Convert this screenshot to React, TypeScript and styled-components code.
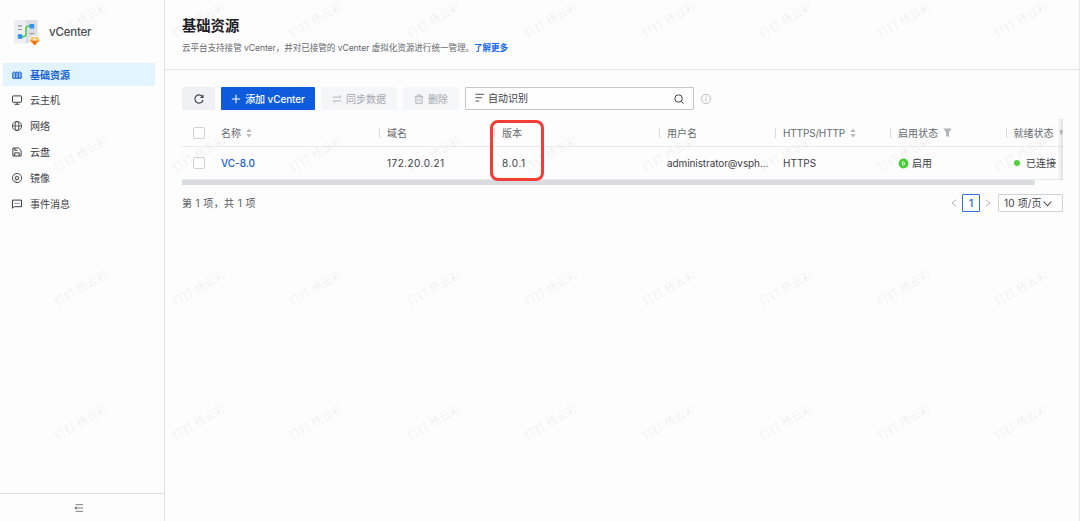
import React from 'react';
import styled, { createGlobalStyle } from 'styled-components';

const Global = createGlobalStyle`
  * { box-sizing: border-box; }
  body {
    margin: 0;
    background: #fdfdfd;
    color: #3d4045;
    font-family: Inter, "Noto Sans CJK SC", sans-serif;
    font-size: 10px;
    line-height: 14px;
    overflow: hidden;
  }
`;

const Shell = styled.div`
  position: relative;
  display: flex;
  width: 1080px;
  height: 521px;
  overflow: hidden;
  border-right: 1px solid #e6e7e8;
`;

const Sidebar = styled.aside`
  display: flex;
  flex-direction: column;
  flex: none;
  width: 165px;
  border-right: 1px solid #dfe0e2;
`;

const Brand = styled.div`
  display: flex;
  align-items: center;
  height: 63px;
  padding: 3px 0 0 12px;
  gap: 7px;
`;

const BrandName = styled.span`
  font-size: 11.5px;
  font-weight: 500;
  letter-spacing: -0.2px;
  color: #4a4d52;
  padding-bottom: 2px;
`;

const Nav = styled.nav`
  display: flex;
  flex-direction: column;
  gap: 2.9px;
  padding: 0 9px 0 3px;
  flex: 1;
`;

const NavItem = styled.a<{ $active?: boolean }>`
  display: flex;
  align-items: center;
  gap: 7px;
  height: 23px;
  padding-left: 8px;
  border-radius: 1px;
  background: ${p => (p.$active ? '#e2f4fe' : 'transparent')};
  color: ${p => (p.$active ? '#1660d6' : '#3d4045')};
  font-weight: ${p => (p.$active ? 700 : 400)};
`;

const Collapse = styled.div`
  display: flex;
  align-items: center;
  justify-content: center;
  height: 28px;
  padding-right: 6px;
  border-top: 1px solid #dfe0e2;
  color: #606368;
`;

const Main = styled.main`
  flex: 1;
  min-width: 0;
`;

const Header = styled.header`
  height: 70px;
  padding: 15px 17px 0;
  border-bottom: 1px solid #e4e5e7;
`;

const Title = styled.h1`
  margin: 0;
  font-size: 14.3px;
  line-height: 21px;
  font-weight: 600;
  color: #1d2025;
`;

const Description = styled.p`
  margin: 5px 0 0;
  font-size: 8.6px;
  line-height: 14px;
  letter-spacing: -0.07px;
  white-space: nowrap;
  color: #66696e;
`;

const MoreLink = styled.a`
  color: #1668f0;
  font-weight: 600;
`;

const Content = styled.section`
  padding: 17px 16px 0 17px;
`;

const Toolbar = styled.div`
  display: flex;
  align-items: center;
  gap: 6px;
  height: 23px;
`;

const Button = styled.button<{ $kind: 'plain' | 'primary' | 'disabled'; $width: number }>`
  display: flex;
  align-items: center;
  justify-content: center;
  gap: 4px;
  flex: none;
  width: ${p => p.$width}px;
  height: 23px;
  padding: 0;
  border: 0;
  border-radius: 1px;
  font: inherit;
  white-space: nowrap;
  font-weight: ${p => (p.$kind === 'primary' ? 500 : 400)};
  letter-spacing: ${p => (p.$kind === 'primary' ? -0.1 : 0)}px;
  background: ${p => ({ plain: '#eff1f5', primary: '#0e5cdd', disabled: '#f5f6f8' })[p.$kind]};
  color: ${p => ({ plain: '#3d4045', primary: '#ffffff', disabled: '#a5a8ad' })[p.$kind]};
`;

const Search = styled.div`
  display: flex;
  align-items: center;
  width: 229px;
  height: 23px;
  padding: 0 8px;
  gap: 2px;
  border: 1px solid #c5c7ca;
  border-radius: 1px;
  background: #fefefe;
`;

const SearchText = styled.span`
  flex: 1;
  padding-bottom: 1px;
`;

const InfoSlot = styled.span`
  display: flex;
  color: #b8babd;
`;

const columns = '39px 166px 115px 165px 116px 115px 116px 49px';

const Table = styled.div`
  position: relative;
  margin-top: 9px;
  width: 881px;
  overflow: hidden;
`;

const TableRow = styled.div<{ $head?: boolean }>`
  display: grid;
  grid-template-columns: ${columns};
  align-items: center;
  height: ${p => (p.$head ? 28 : 33)}px;
  border-bottom: 1px solid #e9eaec;
  color: ${p => (p.$head ? '#66696e' : '#3d4045')};
`;

const Cell = styled.div<{ $gap?: number; $spacing?: number }>`
  display: flex;
  align-items: center;
  gap: ${p => p.$gap ?? 5}px;
  height: 14px;
  white-space: nowrap;
  letter-spacing: ${p => p.$spacing ?? 0}px;
`;

const DividedCell = styled(Cell)`
  margin-left: -8px;
  &::before {
    content: '';
    width: 1px;
    height: 10px;
    margin-right: ${p => 7 - (p.$gap ?? 5)}px;
    background: #d9dadd;
  }
`;

const Checkbox = styled.span`
  width: 12px;
  height: 12px;
  margin-left: 11px;
  border: 1px solid #d0d2d5;
  border-radius: 2px;
  background: #fff;
`;

const NameLink = styled.a`
  color: #1660d6;
  font-weight: 500;
`;

const Dot = styled.span`
  width: 6px;
  height: 6px;
  border-radius: 50%;
  background: #52d13e;
`;

const EdgeShadow = styled.div`
  position: absolute;
  top: 0;
  right: 0;
  width: 6px;
  height: 100%;
  background: linear-gradient(to right, rgba(0, 0, 0, 0), rgba(0, 0, 0, 0.11));
`;

const ScrollTrack = styled.div`
  height: 5px;
`;

const ScrollThumb = styled.div`
  width: 853px;
  height: 5px;
  border-radius: 0 3px 3px 0;
  background: #dadbde;
`;

const Footer = styled.div`
  display: flex;
  align-items: center;
  margin-top: 9px;
  height: 18px;
  color: #55585d;
`;

const Total = styled.span`
  flex: 1;
  letter-spacing: 0.4px;
`;

const Pager = styled.div`
  display: flex;
  align-items: center;
  color: #a9acb0;
`;

const PageNumber = styled.span`
  display: flex;
  align-items: center;
  justify-content: center;
  width: 18px;
  height: 18px;
  margin: 0 4px;
  border: 1px solid #2f6fe0;
  border-radius: 1px;
  color: #1660d6;
  font-weight: 500;
`;

const PageSize = styled.span`
  display: flex;
  align-items: center;
  gap: 1px;
  width: 65px;
  height: 18px;
  margin-left: 6px;
  padding-left: 5px;
  border: 1px solid #d0d2d5;
  border-radius: 1px;
  color: #3d4045;
  white-space: nowrap;
  letter-spacing: 0.15px;
`;

const Highlight = styled.div`
  position: absolute;
  left: 489.5px;
  top: 120px;
  width: 54.5px;
  height: 61px;
  border: 3px solid #f23d33;
  border-radius: 8px;
`;

const WatermarkLayer = styled.div`
  position: absolute;
  left: 22px;
  top: -47px;
  display: grid;
  grid-template-columns: repeat(9, 117.5px);
  grid-auto-rows: 134px;
  pointer-events: none;
`;

const Mark = styled.span`
  display: flex;
  align-items: center;
  justify-content: center;
  font-size: 11.3px;
  font-weight: 500;
  color: rgba(0, 0, 0, 0.06);
  transform: rotate(-30deg);
`;

const Icon = ({ size = 12, width = 1, children }: { size?: number; width?: number; children: React.ReactNode }) => (
  <svg width={size} height={size} viewBox="0 0 12 12" fill="none" stroke="currentColor" strokeWidth={width}>
    {children}
  </svg>
);

const Logo = () => (
  <svg width="30" height="30" viewBox="0 0 30 30">
    <rect x="2" y="2" width="11.5" height="23.5" rx="1" fill="#eceef1" />
    <rect x="13.5" y="2" width="12" height="23.5" rx="1" fill="#dcdee4" />
    <path d="M6 7.8h4M6 11.5h4M17.5 15.5h4.5" stroke="#8b909b" strokeWidth="1.2" />
    <path d="M8 18.6h3.5q2.5 0 2.5-2.5v-6q0-1.8 2-1.8h3" fill="none" stroke="#50cc50" strokeWidth="1.6" />
    <rect x="5.8" y="16.2" width="4.5" height="4.6" rx=".5" fill="#3293ef" />
    <rect x="17.5" y="6" width="4.7" height="4.6" rx=".5" fill="#3293ef" />
    <circle cx="22.6" cy="23" r="5.8" fill="#fdfdfd" />
    <path d="M19.6 19.2h6l2.1 3.4-5.1 5-5.1-5z" fill="#f58a1b" />
    <path d="M19.6 19.2h6l2.1 3.4h-10.2z" fill="#ffc46a" />
    <path d="M20.5 22.6h4.2l-2.1 5z" fill="#e96c0c" />
    <path d="M22.6 19.2l2.1 3.4h-4.2z" fill="#fff0d0" />
  </svg>
);

const icons = {
  resource: (
    <Icon>
      <path d="M1.8 9.3V3.8L3.3 2.8 4.7 3.8V9.3zM4.7 3.8 6 2.8 7.3 3.8V9.3H4.7M7.3 3.8 8.7 2.8l1.5 1v5.5H7.3" fill="#8fbcf5" />
    </Icon>
  ),
  host: (
    <Icon>
      <rect x="1.5" y="1.9" width="9" height="6.4" rx=".6" />
      <path d="M6 8.3v1.8M3.6 10.3h4.8" />
    </Icon>
  ),
  network: (
    <Icon width={0.9}>
      <circle cx="6" cy="6" r="4.6" />
      <ellipse cx="6" cy="6" rx="2" ry="4.6" />
      <path d="M1.4 6h9.2" strokeWidth=".8" />
    </Icon>
  ),
  disk: (
    <Icon>
      <path d="M1.9 2h5.6l2.6 2.5V10H1.9zM3.7 10V6.9h4.5V10M3.8 2v2.4h2.5" />
    </Icon>
  ),
  image: (
    <Icon width={0.9}>
      <circle cx="6" cy="6" r="4.6" />
      <circle cx="6" cy="6" r="1.8" />
      <circle cx="6" cy="6" r=".5" fill="currentColor" stroke="none" />
      <path d="M3.3 7.8q1 1.4 2.7 1.4" strokeWidth=".5" />
    </Icon>
  ),
  event: (
    <Icon>
      <path d="M1.5 10.3V2.1h9v6.6H3.2z" />
      <path d="M3.6 5.4h1M5.5 5.4h1M7.4 5.4h1" />
    </Icon>
  ),
};

const navItems: { icon: keyof typeof icons; label: string }[] = [
  { icon: 'resource', label: '基础资源' },
  { icon: 'host', label: '云主机' },
  { icon: 'network', label: '网络' },
  { icon: 'disk', label: '云盘' },
  { icon: 'image', label: '镜像' },
  { icon: 'event', label: '事件消息' },
];

const Sorter = () => (
  <svg width="6" height="10" viewBox="0 0 6 10" fill="#b7babe">
    <path d="M3 .6 5.7 4H.3zM3 9.4 5.7 6H.3z" />
  </svg>
);

const Filter = () => (
  <svg width="9" height="9" viewBox="0 0 9 9" fill="#b0b3b7">
    <path d="M.5.5h8L5.9 4.5v4H3.1v-4z" />
  </svg>
);

const Chevron = ({ d, size = 8 }: { d: string; size?: number }) => (
  <svg width={size} height={size} viewBox="0 0 8 8" fill="none" stroke="currentColor" strokeWidth="0.9">
    <path d={d} />
  </svg>
);

export default function App() {
  return (
    <>
      <Global />
      <Shell>
        <Sidebar>
          <Brand>
            <Logo />
            <BrandName>vCenter</BrandName>
          </Brand>
          <Nav>
            {navItems.map((item, i) => (
              <NavItem key={item.icon} $active={i === 0}>
                {icons[item.icon]}
                {item.label}
              </NavItem>
            ))}
          </Nav>
          <Collapse>
            <Icon size={10}>
              <path d="M2 2h9M2 6h9M2 10h9" />
              <path d="M3 3.8.6 6 3 8.2z" fill="currentColor" stroke="none" />
            </Icon>
          </Collapse>
        </Sidebar>
        <Main>
          <Header>
            <Title>基础资源</Title>
            <Description>
              云平台支持接管 vCenter，并对已接管的 vCenter 虚拟化资源进行统一管理。<MoreLink>了解更多</MoreLink>
            </Description>
          </Header>
          <Content>
            <Toolbar>
              <Button $kind="plain" $width={33}>
                <Icon width={1.1}>
                  <path d="M9.7 4.2A4.1 4.1 0 1 0 10 7" />
                  <path d="M10 1.8v2.7H7.3" />
                </Icon>
              </Button>
              <Button $kind="primary" $width={94}>
                <Icon size={10} width={1.3}>
                  <path d="M6 1v10M1 6h10" />
                </Icon>
                添加 vCenter
              </Button>
              <Button $kind="disabled" $width={76}>
                <Icon size={10}>
                  <path d="M1 3.8h9.6L8.3 1.5M11 8.2H1.4l2.3 2.3" />
                </Icon>
                同步数据
              </Button>
              <Button $kind="disabled" $width={56}>
                <Icon size={10}>
                  <path d="M.8 3.3h10.4M2.2 3.3v7.8h7.6V3.3M4 3.3V1.2h4v2.1M4.7 5.6v3M7.3 5.6v3" />
                </Icon>
                删除
              </Button>
              <Search>
                <Icon>
                  <path d="M1.5 1.3h8.6M1.5 4.7h6.4M1.5 8.1h3.8" strokeWidth=".9" />
                </Icon>
                <SearchText>自动识别</SearchText>
                <Icon>
                  <circle cx="5.6" cy="5.5" r="3.7" />
                  <path d="M8.2 8.2l2.4 2.5" />
                </Icon>
              </Search>
              <InfoSlot>
                <Icon width={0.9}>
                  <circle cx="6" cy="6" r="4.6" />
                  <path d="M6 5.3v3.3M6 3.3v1" />
                </Icon>
              </InfoSlot>
            </Toolbar>
            <Table>
              <TableRow $head>
                <Checkbox />
                <Cell>名称<Sorter /></Cell>
                <DividedCell>域名</DividedCell>
                <DividedCell>版本</DividedCell>
                <DividedCell>用户名</DividedCell>
                <DividedCell $spacing={-0.15}>HTTPS/HTTP<Sorter /></DividedCell>
                <DividedCell>启用状态<Filter /></DividedCell>
                <DividedCell>就绪状态<Filter /></DividedCell>
              </TableRow>
              <TableRow>
                <Checkbox />
                <Cell><NameLink>VC-8.0</NameLink></Cell>
                <Cell $spacing={0.45}>172.20.0.21</Cell>
                <Cell $spacing={0.6}>8.0.1</Cell>
                <Cell $spacing={-0.1}>administrator@vsph...</Cell>
                <Cell>HTTPS</Cell>
                <Cell $gap={3}>
                  <svg width="11" height="11" viewBox="0 0 11 11">
                    <circle cx="5.5" cy="5.5" r="4.9" fill="#45cf35" />
                    <path d="M4.5 4h.7a1.5 1.5 0 0 1 0 3h-.7z" fill="none" stroke="#fff" strokeWidth="1" />
                  </svg>
                  启用
                </Cell>
                <Cell $gap={6}><Dot />已连接</Cell>
              </TableRow>
              <EdgeShadow />
            </Table>
            <ScrollTrack>
              <ScrollThumb />
            </ScrollTrack>
            <Footer>
              <Total>第 1 项，共 1 项</Total>
              <Pager>
                <Chevron d="M6 .8 2 4l4 3.2" />
                <PageNumber>1</PageNumber>
                <Chevron d="M2 .8 6 4 2 7.2" />
                <PageSize>
                  10 项/页
                  <Chevron d="M.6 2.2 4 6l3.4-3.8" size={9} />
                </PageSize>
              </Pager>
            </Footer>
          </Content>
        </Main>
        <WatermarkLayer>
          {Array.from({ length: 36 }, (_, i) => (
            <Mark key={i}>钉钉 杨云彩</Mark>
          ))}
        </WatermarkLayer>
        <Highlight />
      </Shell>
    </>
  );
}
